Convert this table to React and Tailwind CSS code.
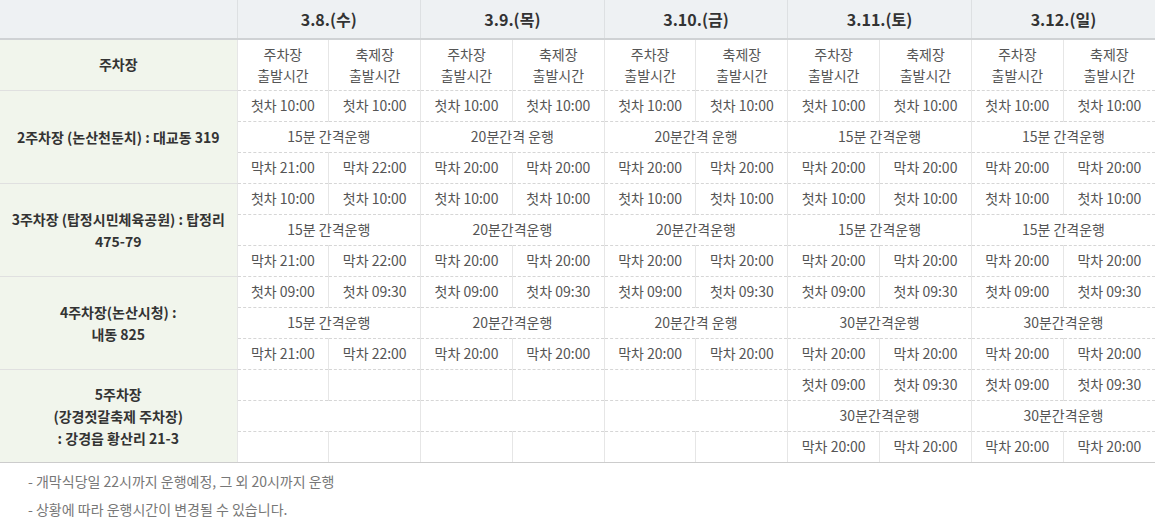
import React from "react";

const dates = ["3.8.(수)", "3.9.(목)", "3.10.(금)", "3.11.(토)", "3.12.(일)"];

const groups = [
  {
    name: ["2주차장 (논산천둔치) : 대교동 319"],
    first: [["10:00", "10:00"], ["10:00", "10:00"], ["10:00", "10:00"], ["10:00", "10:00"], ["10:00", "10:00"]],
    interval: ["15분 간격운행", "20분간격 운행", "20분간격 운행", "15분 간격운행", "15분 간격운행"],
    last: [["21:00", "22:00"], ["20:00", "20:00"], ["20:00", "20:00"], ["20:00", "20:00"], ["20:00", "20:00"]],
  },
  {
    name: ["3주차장 (탑정시민체육공원) : 탑정리", "475-79"],
    first: [["10:00", "10:00"], ["10:00", "10:00"], ["10:00", "10:00"], ["10:00", "10:00"], ["10:00", "10:00"]],
    interval: ["15분 간격운행", "20분간격운행", "20분간격운행", "15분 간격운행", "15분 간격운행"],
    last: [["21:00", "22:00"], ["20:00", "20:00"], ["20:00", "20:00"], ["20:00", "20:00"], ["20:00", "20:00"]],
  },
  {
    name: ["4주차장(논산시청) :", "내동 825"],
    first: [["09:00", "09:30"], ["09:00", "09:30"], ["09:00", "09:30"], ["09:00", "09:30"], ["09:00", "09:30"]],
    interval: ["15분 간격운행", "20분간격운행", "20분간격 운행", "30분간격운행", "30분간격운행"],
    last: [["21:00", "22:00"], ["20:00", "20:00"], ["20:00", "20:00"], ["20:00", "20:00"], ["20:00", "20:00"]],
  },
  {
    name: ["5주차장", "(강경젓갈축제 주차장)", ": 강경읍 황산리 21-3"],
    first: [null, null, null, ["09:00", "09:30"], ["09:00", "09:30"]],
    interval: ["", "", "", "30분간격운행", "30분간격운행"],
    last: [null, null, null, ["20:00", "20:00"], ["20:00", "20:00"]],
  },
];

const cell = "h-[31px] text-center text-[14px] text-[#555] whitespace-nowrap border-l border-l-[#e6e6e6]";
const dashed = "border-b border-dashed border-b-[#d6d6d6]";
const bottom = "border-b border-b-[#cccccc]";

export default function App() {
  return (
    <div className="w-[1155px] h-[523px] bg-white overflow-hidden" style={{ fontFamily: '"Noto Sans CJK KR", "Noto Sans", sans-serif' }}>
      <table className="w-[1155px] table-fixed border-collapse">
        <colgroup>
          <col className="w-[237px]" />
          {Array.from({ length: 10 }).map((_, i) => (
            <col key={i} />
          ))}
        </colgroup>
        <thead>
          <tr className="bg-[#eef1f3]">
            <th className="h-[39px] border-b-2 border-b-[#cfd2d4]"></th>
            {dates.map((d) => (
              <th key={d} colSpan={2} className="h-[39px] text-[16px] font-bold text-[#333] border-l border-l-[#dde0e2] border-b-2 border-b-[#cfd2d4]">
                {d}
              </th>
            ))}
          </tr>
        </thead>
        <tbody>
          <tr>
            <td className="h-[51px] bg-[#f1f5ec] text-center text-[14px] font-bold text-[#333] border-b border-b-[#e0e0e0]">주차장</td>
            {dates.map((d) => (
              <React.Fragment key={d}>
                <td className={`h-[51px] text-center text-[14px] leading-[21px] text-[#555] border-l border-l-[#e6e6e6] ${dashed}`} style={{ borderLeftStyle: "solid" }}>
                  주차장
                  <br />
                  출발시간
                </td>
                <td className={`h-[51px] text-center text-[14px] leading-[21px] text-[#555] border-l border-l-[#e6e6e6] ${dashed}`} style={{ borderLeftStyle: "solid" }}>
                  축제장
                  <br />
                  출발시간
                </td>
              </React.Fragment>
            ))}
          </tr>
          {groups.map((g, gi) => {
            const isLast = gi === groups.length - 1;
            return (
              <React.Fragment key={gi}>
                <tr>
                  <td rowSpan={3} className={`bg-[#f1f5ec] text-center align-middle text-[14px] font-bold leading-[22px] text-[#333] ${isLast ? bottom : "border-b border-b-[#e0e0e0]"}`}>
                    {g.name.map((l, i) => (
                      <div key={i}>{l}</div>
                    ))}
                  </td>
                  {g.first.map((d, i) => (
                    <React.Fragment key={i}>
                      <td className={`${cell} ${dashed}`} style={{ borderLeftStyle: "solid" }}>{d ? `첫차 ${d[0]}` : ""}</td>
                      <td className={`${cell} ${dashed}`} style={{ borderLeftStyle: "solid" }}>{d ? `첫차 ${d[1]}` : ""}</td>
                    </React.Fragment>
                  ))}
                </tr>
                <tr>
                  {g.interval.map((t, i) => (
                    <td key={i} colSpan={2} className={`${cell} ${dashed}`} style={{ borderLeftStyle: "solid" }}>
                      {t}
                    </td>
                  ))}
                </tr>
                <tr>
                  {g.last.map((d, i) => (
                    <React.Fragment key={i}>
                      <td className={`${cell} ${isLast ? bottom : dashed}`} style={{ borderLeftStyle: "solid" }}>{d ? `막차 ${d[0]}` : ""}</td>
                      <td className={`${cell} ${isLast ? bottom : dashed}`} style={{ borderLeftStyle: "solid" }}>{d ? `막차 ${d[1]}` : ""}</td>
                    </React.Fragment>
                  ))}
                </tr>
              </React.Fragment>
            );
          })}
        </tbody>
      </table>
      <div className="pl-[28px] pt-[4px] text-[14px] leading-[28px] text-[#777]">
        <p>- 개막식당일 22시까지 운행예정, 그 외 20시까지 운행</p>
        <p>- 상황에 따라 운행시간이 변경될 수 있습니다.</p>
      </div>
    </div>
  );
}
